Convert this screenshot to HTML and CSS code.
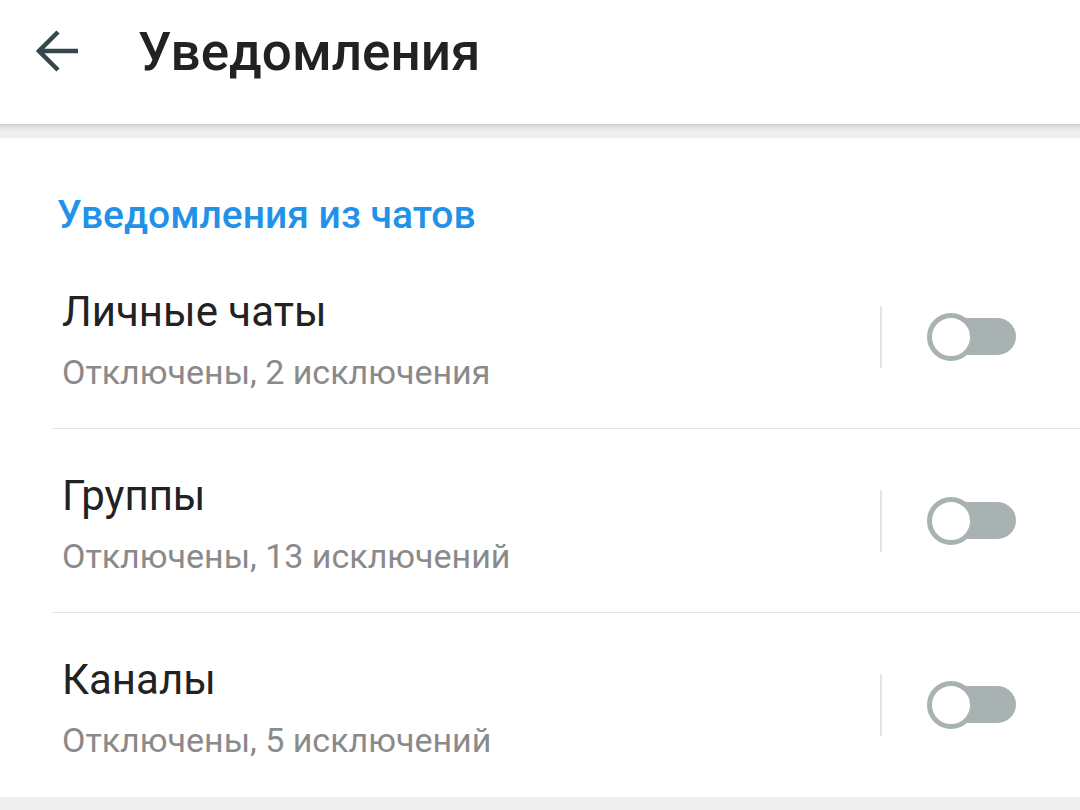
FILE: index.html
```html
<!DOCTYPE html>
<html lang="ru">
<head>
  <meta charset="UTF-8">
  <title>Уведомления</title>
  <link rel="stylesheet" href="styles.css">
</head>
<body>
  <div class="topbar">
    <svg class="back" width="44" height="44" viewBox="0 0 44 44">
      <path d="M42 22H4M22 3L3 22l19 19" fill="none" stroke="#35474d" stroke-width="4.5" stroke-linecap="butt" stroke-linejoin="miter"/>
    </svg>
    <div class="title">Уведомления</div>
  </div>
  <div class="gap"></div>
  <div class="card">
    <div class="section">Уведомления из чатов</div>
    <ul class="list">
      <li class="item">
        <div class="text">
          <div class="name">Личные чаты</div>
          <div class="sub">Отключены, 2 исключения</div>
        </div>
        <div class="vline"></div>
        <div class="toggle"><span class="track"></span><span class="knob"></span></div>
      </li>
      <li class="item">
        <div class="text">
          <div class="name">Группы</div>
          <div class="sub">Отключены, 13 исключений</div>
        </div>
        <div class="vline"></div>
        <div class="toggle"><span class="track"></span><span class="knob"></span></div>
      </li>
      <li class="item">
        <div class="text">
          <div class="name">Каналы</div>
          <div class="sub">Отключены, 5 исключений</div>
        </div>
        <div class="vline"></div>
        <div class="toggle"><span class="track"></span><span class="knob"></span></div>
      </li>
    </ul>
  </div>
</body>
</html>
```
FILE: styles.css
```css
body{
  margin: 0;
  background: #efefef;
  font-family: Roboto, "Noto Sans", sans-serif;
}
.topbar{
  height: 124px;
  box-sizing: border-box;
  padding: 20px 0 0 36px;
  background: #fff;
  display: flex;
  align-items: flex-start;
}
.back{
  margin-top: 9px;
  flex: none;
}
.title{
  margin-left: 58px;
  font-size: 53px;
  line-height: 64px;
  font-weight: 500;
  color: #222;
}
.gap{
  height: 14px;
  background: linear-gradient(#cfcfcf, #e6e6e6 4px, #eeeeee 8px);
}
.card{
  background: #fff;
  height: 659px;
}
.section{
  padding: 53px 0 0 57px;
  font-size: 39px;
  line-height: 48px;
  font-weight: 500;
  color: #2192e8;
}
.list{
  margin: 6px 0 0 52px;
  padding: 0;
  list-style: none;
}
.item{
  height: 183px;
  display: flex;
  align-items: center;
  padding-left: 10px;
  border-bottom: 1px solid #e3e3e3;
}
.item:last-child{
  border-bottom: none;
}
.text{
  flex: 1;
  margin-top: 7px;
}
.name{
  font-size: 42px;
  line-height: 52px;
  color: #222;
}
.sub{
  margin-top: 12px;
  font-size: 34px;
  line-height: 44px;
  color: #8a8a8a;
}
.vline{
  width: 2px;
  height: 62px;
  background: #e4e4e4;
  margin-right: 45px;
}
.toggle{
  position: relative;
  width: 89px;
  height: 48px;
  margin-right: 64px;
  margin-top: 1px;
}
.track{
  position: absolute;
  left: 2px;
  right: 0;
  top: 5px;
  height: 37px;
  border-radius: 19px;
  background: #a9b2b2;
}
.knob{
  position: absolute;
  left: 0;
  top: 0;
  width: 38px;
  height: 38px;
  border: 5px solid #a9b2b2;
  border-radius: 50%;
  background: #fff;
}
```
